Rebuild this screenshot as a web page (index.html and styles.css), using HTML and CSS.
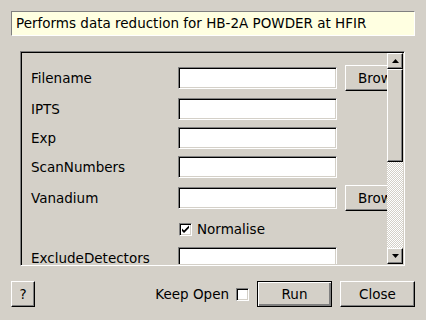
FILE: index.html
```html
<!DOCTYPE html>
<html lang="en">

<head>
    <meta charset="UTF-8">
    <meta name="viewport" content="width=device-width, initial-scale=1.0">
    <title>PowderReduceP2D</title>
    <link rel="stylesheet" href="styles.css">
</head>

<body>
    <div class="dialog">
        <div class="descripcion">Performs data reduction for HB-2A POWDER at HFIR</div>

        <div class="marco">
            <div class="vista">
                <div class="propiedades">
                    <label for="filename">Filename</label>
                    <input type="text" id="filename" class="campo">
                    <button class="boton">Browse</button>

                    <label for="ipts">IPTS</label>
                    <input type="text" id="ipts" class="campo">
                    <span></span>

                    <label for="exp">Exp</label>
                    <input type="text" id="exp" class="campo">
                    <span></span>

                    <label for="scan">ScanNumbers</label>
                    <input type="text" id="scan" class="campo">
                    <span></span>

                    <label for="vanadium">Vanadium</label>
                    <input type="text" id="vanadium" class="campo">
                    <button class="boton">Browse</button>

                    <span></span>
                    <div class="check-fila">
                        <span class="check marcado">
                            <svg width="9" height="9" viewBox="0 0 9 9"><path d="M1 3.5 L3 5.5 L8 0.5 L8 3 L3 8 L1 6 Z" fill="#000"/></svg>
                        </span>
                        <span>Normalise</span>
                    </div>
                    <span></span>

                    <label for="exclude">ExcludeDetectors</label>
                    <input type="text" id="exclude" class="campo">
                    <span></span>
                </div>
            </div>
            <div class="scroll">
                <div class="scroll-btn">
                    <svg width="7" height="4" viewBox="0 0 7 4"><path d="M3.5 0 L7 4 L0 4 Z" fill="#000"/></svg>
                </div>
                <div class="scroll-barra"></div>
                <div class="scroll-pista"></div>
                <div class="scroll-btn">
                    <svg width="7" height="4" viewBox="0 0 7 4"><path d="M0 0 L7 0 L3.5 4 Z" fill="#000"/></svg>
                </div>
            </div>
        </div>

        <div class="acciones">
            <button class="boton ayuda">?</button>
            <span class="espacio"></span>
            <span class="keep">Keep Open</span>
            <span class="check"></span>
            <button class="boton defecto">Run</button>
            <button class="boton">Close</button>
        </div>
    </div>
</body>

</html>
```

FILE: styles.css
```css
body {
    margin: 0;
    background-color: #d4d0c8;
    font-family: "DejaVu Sans", sans-serif;
    font-size: 13.5px;
    color: #000;
}

.dialog {
    width: 426px;
    height: 320px;
    box-sizing: border-box;
    padding: 11px 11px 0 11px;
    display: flex;
    flex-direction: column;
}

.descripcion {
    height: 25px;
    box-sizing: border-box;
    background-color: #ffffe1;
    border: 1px solid;
    border-color: #808080 #ffffff #ffffff #808080;
    padding-left: 4px;
    line-height: 23px;
    white-space: nowrap;
}

.marco {
    margin: 15px 10px 0 9px;
    height: 215px;
    box-sizing: border-box;
    border: 1px solid;
    border-color: #808080 #ffffff #ffffff #808080;
    box-shadow: inset 1px 1px #000, inset -1px -1px #d4d0c8;
    padding: 1px;
    display: flex;
}

.vista {
    flex: 1;
    overflow: hidden;
}

.propiedades {
    display: grid;
    grid-template-columns: 139px 159px 75px;
    grid-template-rows: 26px 22px 22px 22px 26px 22px 22px;
    column-gap: 8px;
    row-gap: 7px;
    align-items: center;
    padding: 12px 0 0 9px;
}

.propiedades label {
    white-space: nowrap;
}

.campo {
    height: 22px;
    box-sizing: border-box;
    margin: 0;
    padding: 0;
    background-color: #fff;
    border: 1px solid;
    border-color: #808080 #ffffff #ffffff #808080;
    box-shadow: inset 1px 1px #000, inset -1px -1px #d4d0c8;
    outline: none;
}

.boton {
    height: 26px;
    width: 75px;
    box-sizing: border-box;
    margin: 0;
    padding: 0;
    font-family: "DejaVu Sans", sans-serif;
    font-size: 13.5px;
    color: #000;
    background-color: #d4d0c8;
    border: 1px solid;
    border-color: #ffffff #000000 #000000 #ffffff;
    box-shadow: inset -1px -1px #808080;
    white-space: nowrap;
}

.check-fila {
    display: flex;
    align-items: center;
    gap: 5px;
    padding-left: 1px;
}

.check {
    width: 13px;
    height: 13px;
    box-sizing: border-box;
    background-color: #fff;
    border: 1px solid;
    border-color: #808080 #ffffff #ffffff #808080;
    box-shadow: inset 1px 1px #000, inset -1px -1px #d4d0c8;
    display: flex;
    align-items: center;
    justify-content: center;
}

.check svg {
    display: block;
}

.scroll {
    width: 16px;
    display: flex;
    flex-direction: column;
}

.scroll-btn {
    height: 16px;
    box-sizing: border-box;
    background-color: #d4d0c8;
    border: 1px solid;
    border-color: #ffffff #000000 #000000 #ffffff;
    box-shadow: inset -1px -1px #808080;
    display: flex;
    align-items: center;
    justify-content: center;
}

.scroll-barra {
    height: 93px;
    box-sizing: border-box;
    background-color: #d4d0c8;
    border: 1px solid;
    border-color: #ffffff #000000 #000000 #ffffff;
    box-shadow: inset -1px -1px #808080;
}

.scroll-pista {
    flex: 1;
    background-image: repeating-conic-gradient(#ffffff 0 25%, #d4d0c8 0 50%);
    background-size: 2px 2px;
}

.acciones {
    margin-top: 15px;
    display: flex;
    align-items: center;
    gap: 8px;
}

.ayuda {
    width: 24px;
}

.espacio {
    flex: 1;
}

.keep {
    margin-right: -1px;
}

.defecto {
    border-color: #000;
    box-shadow: inset 1px 1px #fff, inset -2px -2px #808080;
}
```
